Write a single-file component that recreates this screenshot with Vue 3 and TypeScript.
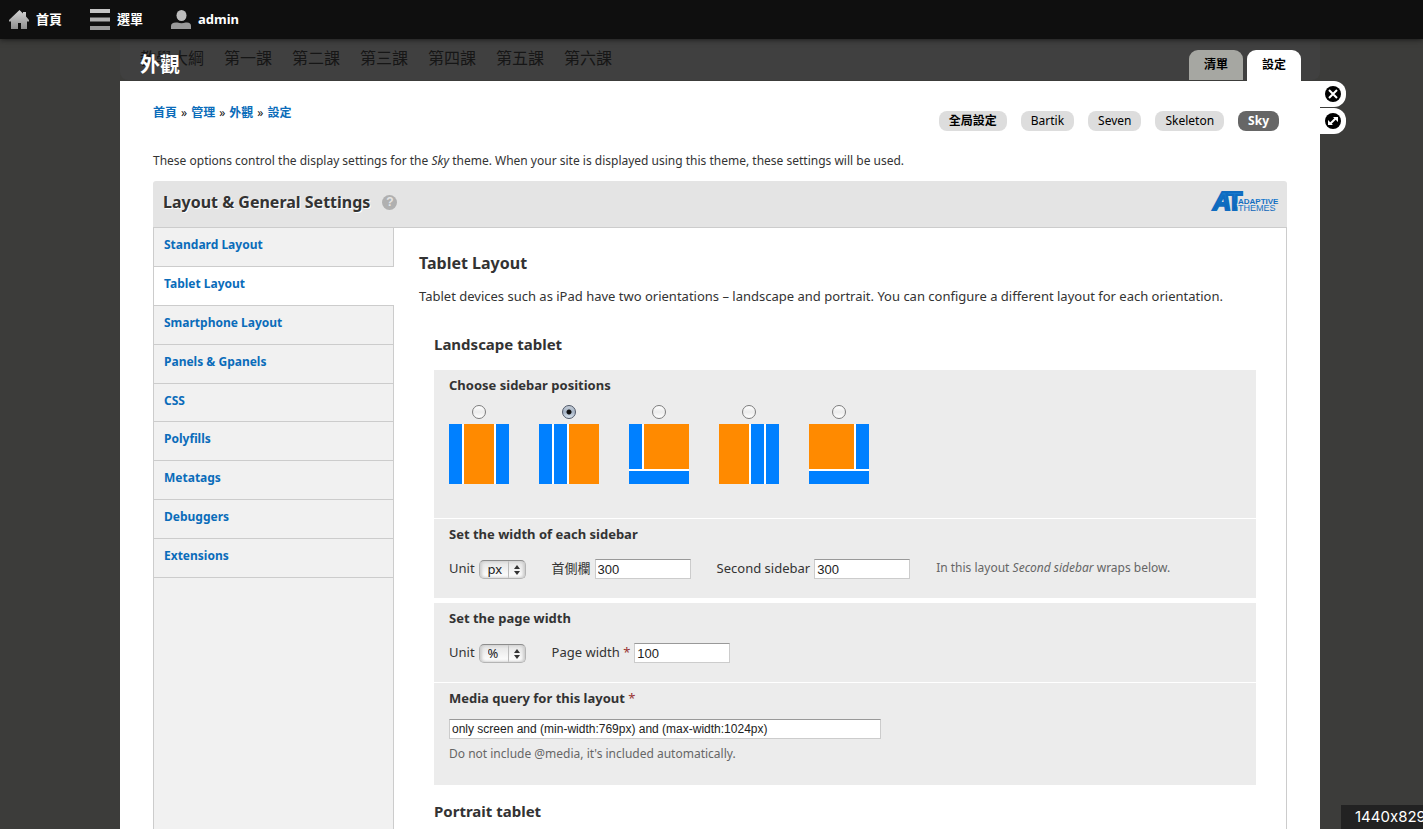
<script setup lang="ts">
import { ref } from 'vue'

interface SidebarLayout {
  id: string
  blocks: { x: number; y: number; w: number; h: number; main?: boolean }[]
}

const lessons = ['教學大綱', '第一課', '第二課', '第三課', '第四課', '第五課', '第六課']
const crumbs = ['首頁', '管理', '外觀', '設定']
const themes = ['全局設定', 'Bartik', 'Seven', 'Skeleton', 'Sky']
const activeTheme = 'Sky'
const sections = [
  'Standard Layout',
  'Tablet Layout',
  'Smartphone Layout',
  'Panels & Gpanels',
  'CSS',
  'Polyfills',
  'Metatags',
  'Debuggers',
  'Extensions',
]
const activeSection = ref('Tablet Layout')

const layouts: SidebarLayout[] = [
  {
    id: 'three-col-grail',
    blocks: [
      { x: 0, y: 0, w: 13, h: 60 },
      { x: 15, y: 0, w: 30, h: 60, main: true },
      { x: 47, y: 0, w: 13, h: 60 },
    ],
  },
  {
    id: 'two-left',
    blocks: [
      { x: 0, y: 0, w: 13, h: 60 },
      { x: 15, y: 0, w: 13, h: 60 },
      { x: 30, y: 0, w: 30, h: 60, main: true },
    ],
  },
  {
    id: 'left-stack',
    blocks: [
      { x: 0, y: 0, w: 13, h: 45 },
      { x: 15, y: 0, w: 45, h: 45, main: true },
      { x: 0, y: 47, w: 60, h: 13 },
    ],
  },
  {
    id: 'two-right',
    blocks: [
      { x: 0, y: 0, w: 30, h: 60, main: true },
      { x: 32, y: 0, w: 13, h: 60 },
      { x: 47, y: 0, w: 13, h: 60 },
    ],
  },
  {
    id: 'right-stack',
    blocks: [
      { x: 0, y: 0, w: 45, h: 45, main: true },
      { x: 47, y: 0, w: 13, h: 45 },
      { x: 0, y: 47, w: 60, h: 13 },
    ],
  },
]
const chosen = ref('two-left')
const sidebarUnit = ref('px')
const pageUnit = ref('%')
const firstSidebar = ref('300')
const secondSidebar = ref('300')
const pageWidth = ref('100')
const mediaQuery = ref('only screen and (min-width:769px) and (max-width:1024px)')
</script>

<template>
  <div class="page">
    <header class="toolbar">
      <a href="#" class="tool">
        <svg width="20" height="20" viewBox="0 0 20 20" aria-hidden="true">
          <defs>
            <linearGradient id="metal" x1="0" y1="0" x2="0" y2="1">
              <stop offset="0" stop-color="#d4d4d4" />
              <stop offset="1" stop-color="#8e8e8e" />
            </linearGradient>
          </defs>
          <path fill="url(#metal)" d="M10.500 0 14 3.500V2h3v4.500l3 3.500v1.500h-2V19h-6v-6H9v6H2v-7.500H0V10z" />
        </svg>
        <span>首頁</span>
      </a>
      <a href="#" class="tool">
        <svg width="20" height="21" viewBox="0 0 20 21" aria-hidden="true">
          <path fill="#c4c4c4" d="M0 0h20v4H0z" />
          <path fill="#b0b0b0" d="M0 8.500h20v4H0z" />
          <path fill="#989898" d="M0 17h20v4H0z" />
        </svg>
        <span>選單</span>
      </a>
      <a href="#" class="tool">
        <svg width="20" height="20" viewBox="0 0 20 20" aria-hidden="true">
          <ellipse cx="10.500" cy="5.500" rx="5" ry="5.500" fill="#bdbdbd" />
          <path fill="#999" d="M0 19v-3q0-3.500 5-3.500h1.500q4 1.500 8 0H16q4 0 4 3.500v3z" />
        </svg>
        <span>admin</span>
      </a>
    </header>

    <nav class="site-nav">
      <a v-for="l in lessons" :key="l" href="#">{{ l }}</a>
    </nav>

    <main class="overlay">
      <div class="overlay-head">
        <h1>外觀</h1>
        <nav class="tabs">
          <a href="#" class="tab">清單</a>
          <a href="#" class="tab current">設定</a>
        </nav>
      </div>

      <div class="sheet">
        <div class="handles">
          <button type="button" aria-label="Close overlay">
            <svg width="16" height="16" viewBox="0 0 16 16">
              <circle cx="8" cy="8" r="8" />
              <path d="M4 4l8 8M12 4l-8 8" stroke="#fff" stroke-width="2" />
            </svg>
          </button>
          <button type="button" aria-label="Expand overlay">
            <svg width="16" height="16" viewBox="0 0 16 16">
              <circle cx="8" cy="8" r="8" />
              <path d="M5 11l6-6" stroke="#fff" stroke-width="2" />
              <path d="M8 4h5v5zM3 7v5h5z" fill="#fff" />
            </svg>
          </button>
        </div>

        <div class="top-row">
          <nav class="crumbs">
            <template v-for="(c, i) in crumbs" :key="c">
              <span v-if="i > 0">»</span>
              <a href="#">{{ c }}</a>
            </template>
          </nav>
          <nav class="pills">
            <a v-for="t in themes" :key="t" href="#" :class="{ on: t === activeTheme }">{{ t }}</a>
          </nav>
        </div>

        <p class="intro">
          These options control the display settings for the <em>Sky</em> theme. When your site is displayed using this
          theme, these settings will be used.
        </p>

        <section class="settings">
          <header class="settings-head">
            <h2>Layout &amp; General Settings</h2>
            <button type="button" class="help" aria-label="Help">?</button>
            <svg class="brand" width="66" height="24" viewBox="0 0 66 24" role="img" aria-label="Adaptive Themes">
              <defs>
                <linearGradient id="brand-blue" x1="0" y1="0" x2="0" y2="1">
                  <stop offset="0" stop-color="#1a82d8" />
                  <stop offset="1" stop-color="#0a5cae" />
                </linearGradient>
              </defs>
              <g fill="url(#brand-blue)" font-family="Liberation Sans, sans-serif">
                <text x="1" y="20" font-size="25" font-weight="700" font-style="italic" stroke="#0f6cc0" stroke-width="2">A</text>
                <text x="15" y="20" font-size="25" font-weight="700" stroke="#0f6cc0" stroke-width="2">T</text>
                <text x="26" y="14" font-size="8" font-weight="700" stroke="#e4e4e4" stroke-width="2" paint-order="stroke">ADAPTIVE</text>
                <text x="26" y="21" font-size="9" stroke="#e4e4e4" stroke-width="2" paint-order="stroke">THEMES</text>
              </g>
            </svg>
          </header>

          <div class="settings-body">
            <nav class="side">
              <ul>
                <li v-for="s in sections" :key="s" :class="{ active: s === activeSection }">
                  <a href="#" @click.prevent="activeSection = s">{{ s }}</a>
                </li>
              </ul>
            </nav>

            <form class="content" @submit.prevent>
              <h3>Tablet Layout</h3>
              <p class="lead">
                Tablet devices such as iPad have two orientations – landscape and portrait. You can configure a
                different layout for each orientation.
              </p>

              <div class="group">
                <h4>Landscape tablet</h4>

                <div class="box choose">
                  <h5>Choose sidebar positions</h5>
                  <div class="choices">
                    <label v-for="l in layouts" :key="l.id">
                      <input v-model="chosen" type="radio" name="layout" :value="l.id" :aria-label="l.id" />
                      <svg width="60" height="60" viewBox="0 0 60 60" aria-hidden="true">
                        <rect width="60" height="60" fill="#fff" />
                        <rect
                          v-for="(b, i) in l.blocks"
                          :key="i"
                          :x="b.x"
                          :y="b.y"
                          :width="b.w"
                          :height="b.h"
                          :fill="b.main ? '#ff8a00' : '#0080ff'"
                        />
                      </svg>
                    </label>
                  </div>
                </div>

                <div class="box">
                  <h5>Set the width of each sidebar</h5>
                  <div class="fields">
                    <div class="field">
                      <label for="unit-a">Unit</label>
                      <span class="pick">
                        <select id="unit-a" v-model="sidebarUnit">
                          <option>px</option>
                          <option>%</option>
                        </select>
                        <svg width="6" height="10" viewBox="0 0 6 10" aria-hidden="true"><path d="M3 0l3 4H0zM3 10l3-4H0z" fill="#333" /></svg>
                      </span>
                    </div>
                    <div class="field">
                      <label for="first">首側欄</label>
                      <input id="first" v-model="firstSidebar" type="text" />
                    </div>
                    <div class="field">
                      <label for="second">Second sidebar</label>
                      <input id="second" v-model="secondSidebar" type="text" />
                    </div>
                    <span class="note">In this layout <em>Second sidebar</em> wraps below.</span>
                  </div>
                </div>

                <div class="box apart">
                  <h5>Set the page width</h5>
                  <div class="fields">
                    <div class="field">
                      <label for="unit-b">Unit</label>
                      <span class="pick">
                        <select id="unit-b" v-model="pageUnit">
                          <option>%</option>
                          <option>px</option>
                        </select>
                        <svg width="6" height="10" viewBox="0 0 6 10" aria-hidden="true"><path d="M3 0l3 4H0zM3 10l3-4H0z" fill="#333" /></svg>
                      </span>
                    </div>
                    <div class="field">
                      <label for="page-width">Page width <b class="req">*</b></label>
                      <input id="page-width" v-model="pageWidth" type="text" />
                    </div>
                  </div>
                </div>

                <div class="box media">
                  <h5><label for="media">Media query for this layout <b class="req">*</b></label></h5>
                  <input id="media" v-model="mediaQuery" type="text" />
                  <p class="note">Do not include @media, it's included automatically.</p>
                </div>

                <h4 class="next">Portrait tablet</h4>
              </div>
            </form>
          </div>
        </section>
      </div>
    </main>

    <output class="size">1440x829</output>
  </div>
</template>

<style>
body {
  background: #3c3c3a;
}
</style>

<style scoped>
* {
  box-sizing: border-box;
}
.page {
  position: relative;
  display: flex;
  flex-direction: column;
  height: 100vh;
  overflow: hidden;
  font: 12px/18px 'Noto Sans', 'Noto Sans CJK TC', sans-serif;
  color: #333;
}
h1, h2, h3, h4, h5, p, ul {
  margin: 0;
  padding: 0;
}
a {
  color: #0a6cba;
  text-decoration: none;
}
button {
  border: 0;
  padding: 0;
}
.toolbar {
  position: relative;
  z-index: 2;
  flex: none;
  display: flex;
  gap: 28px;
  align-items: center;
  height: 39px;
  padding: 0 9px;
  background: #0f0f0f;
  box-shadow: 0 0 6px #111;
}
.tool {
  display: flex;
  gap: 7px;
  align-items: center;
  color: #fff;
  font-size: 13px;
  font-weight: 700;
}
.tool span {
  padding-bottom: 2px;
}
.site-nav {
  position: absolute;
  top: 39px;
  left: 120px;
  right: 103px;
  display: flex;
  gap: 20px;
  height: 41px;
  padding: 7px 20px;
  border-radius: 0 0 8px 8px;
  background: #404040;
}
.site-nav a {
  color: #161616;
  font-size: 16px;
  line-height: 24px;
}
.overlay {
  position: relative;
  flex: 1;
  display: flex;
  flex-direction: column;
  margin: 0 103px 0 120px;
}
.overlay-head {
  display: flex;
  justify-content: space-between;
  align-items: flex-end;
  height: 42px;
  padding: 0 19px 0 20px;
}
h1 {
  color: #fff;
  font-size: 20px;
  line-height: 32px;
}
.tabs {
  display: flex;
  gap: 4px;
  height: 31px;
}
.tab {
  width: 54px;
  height: 30px;
  border-radius: 9px 9px 0 0;
  background: #a6a7a2;
  color: #000;
  font-weight: 700;
  line-height: 29px;
  text-align: center;
}
.tab.current {
  height: 31px;
  background: #fff;
}
.sheet {
  position: relative;
  flex: 1;
  display: flex;
  flex-direction: column;
  padding: 22px 33px 0;
  background: #fff;
}
.handles {
  position: absolute;
  top: 0;
  left: 100%;
  display: flex;
  flex-direction: column;
  gap: 1px;
}
.handles button {
  display: flex;
  align-items: center;
  width: 26px;
  height: 26px;
  padding-left: 5px;
  border-radius: 0 12px 12px 0;
  background: #fff;
}
.top-row {
  display: flex;
  justify-content: space-between;
}
.crumbs {
  display: flex;
  gap: 4px;
  padding-top: 1px;
  color: #111;
}
.crumbs a {
  font-weight: 700;
}
.pills {
  display: flex;
  gap: 14px;
  padding: 8px 8px 0 0;
}
.pills a {
  height: 20px;
  padding: 0 10px;
  border-radius: 8px;
  background: #ddd;
  color: #000;
  line-height: 19px;
}
.pills a:first-child {
  font-weight: 700;
}
.pills .on {
  background: #666;
  color: #fff;
  font-weight: 700;
}
.intro {
  margin-top: 21px;
}
.settings {
  flex: 1;
  display: flex;
  flex-direction: column;
  margin-top: 11px;
}
.settings-head {
  display: flex;
  align-items: center;
  height: 47px;
  padding: 0 9px 4px 10px;
  border-bottom: 1px solid #ccc;
  border-radius: 3px 3px 0 0;
  background: #e4e4e4;
}
h2 {
  font-size: 16px;
  line-height: 24px;
  text-shadow: 1px 1px 0 #fff;
}
.help {
  width: 15px;
  height: 15px;
  margin-left: 12px;
  border-radius: 8px;
  background: #b0b0b0;
  color: #e4e4e4;
  font: 700 12px/15px 'Liberation Sans', sans-serif;
}
.brand {
  margin-left: auto;
  overflow: visible;
}
.settings-body {
  flex: 1;
  display: flex;
  border: 1px solid #ccc;
  border-width: 0 1px;
}
.side {
  width: 240px;
  background: #f1f1f1;
  box-shadow: inset -1px 0 #ccc;
}
.side ul {
  display: grid;
  grid-auto-rows: 1fr;
  height: 350px;
  list-style: none;
}
.side li {
  padding: 8px 10px;
  border-bottom: 1px solid #ccc;
  font-weight: 700;
}
.side .active {
  background: #fff;
}
.content {
  flex: 1;
  padding: 23px 30px 0 25px;
}
h3 {
  font-size: 16px;
  line-height: 24px;
}
.lead {
  margin-top: 11px;
  font-size: 13px;
  line-height: 20px;
  white-space: nowrap;
}
.group {
  margin: 27px 0 0 15px;
}
h4 {
  font-size: 15px;
  line-height: 22px;
}
.box {
  height: 80px;
  padding: 6px 15px;
  border-top: 1px solid #fff;
  background: #ececec;
}
.choose {
  height: 148px;
  margin-top: 15px;
  border: 0;
}
.apart {
  margin-top: 4px;
}
.media {
  height: 103px;
}
.next {
  margin-top: 15px;
}
h5 {
  font-size: 13px;
  line-height: 18px;
}
.choices {
  display: flex;
  gap: 30px;
  margin-top: 11px;
}
.choices label {
  display: flex;
  flex-direction: column;
  align-items: center;
  gap: 5px;
}
input[type='radio'] {
  appearance: none;
  width: 14px;
  height: 14px;
  margin: 0;
  border: 1px solid #7c7c7c;
  border-radius: 7px;
  background: linear-gradient(#fff, #ececec 50%, #fff);
}
input[type='radio']:checked {
  border-color: #4c5566;
  background: radial-gradient(circle, #111 2px, transparent 3px), linear-gradient(#c4ccd6, #a4b2c4 50%, #dbe6f0);
}
.fields {
  display: flex;
  align-items: flex-start;
  gap: 26px;
  margin-top: 16px;
}
.field {
  display: flex;
  align-items: flex-start;
  gap: 4px;
  font-size: 13px;
}
.pick {
  position: relative;
  display: flex;
  padding-top: 1px;
}
.pick svg {
  position: absolute;
  top: 6px;
  right: 6px;
  pointer-events: none;
}
select {
  appearance: none;
  width: 47px;
  height: 19px;
  padding: 0 0 0 8px;
  border: 1px solid #b4b4b4;
  border-top-color: #8c8c8c;
  border-radius: 5px;
  background: linear-gradient(90deg, transparent 28px, #bbb 28px, #bbb 29px, transparent 29px), linear-gradient(#e4e4e4, #fff);
  box-shadow: inset 2px 0 3px #ccc, inset -2px 0 3px #ccc;
  color: #222;
  font: 13px/17px 'Noto Sans', sans-serif;
}
input[type='text'] {
  width: 96px;
  height: 20px;
  padding: 0 2px;
  border: 1px solid #ccc;
  border-top-color: #999;
  background: #fff;
  color: #222;
  font: 13px 'Liberation Sans', sans-serif;
}
.req {
  color: #933;
  font-weight: 400;
}
.note {
  color: #666;
}
.media input[type='text'] {
  display: block;
  width: 432px;
  max-width: 100%;
  margin: 12px 0 6px;
  font-size: 12px;
}
.size {
  position: fixed;
  right: 0;
  bottom: 0;
  z-index: 3;
  width: 82px;
  height: 24px;
  padding-left: 14px;
  overflow: hidden;
  background: #222;
  color: #fff;
  font: 15px/24px Inter, sans-serif;
  font-variant-ligatures: none;
}
</style>
